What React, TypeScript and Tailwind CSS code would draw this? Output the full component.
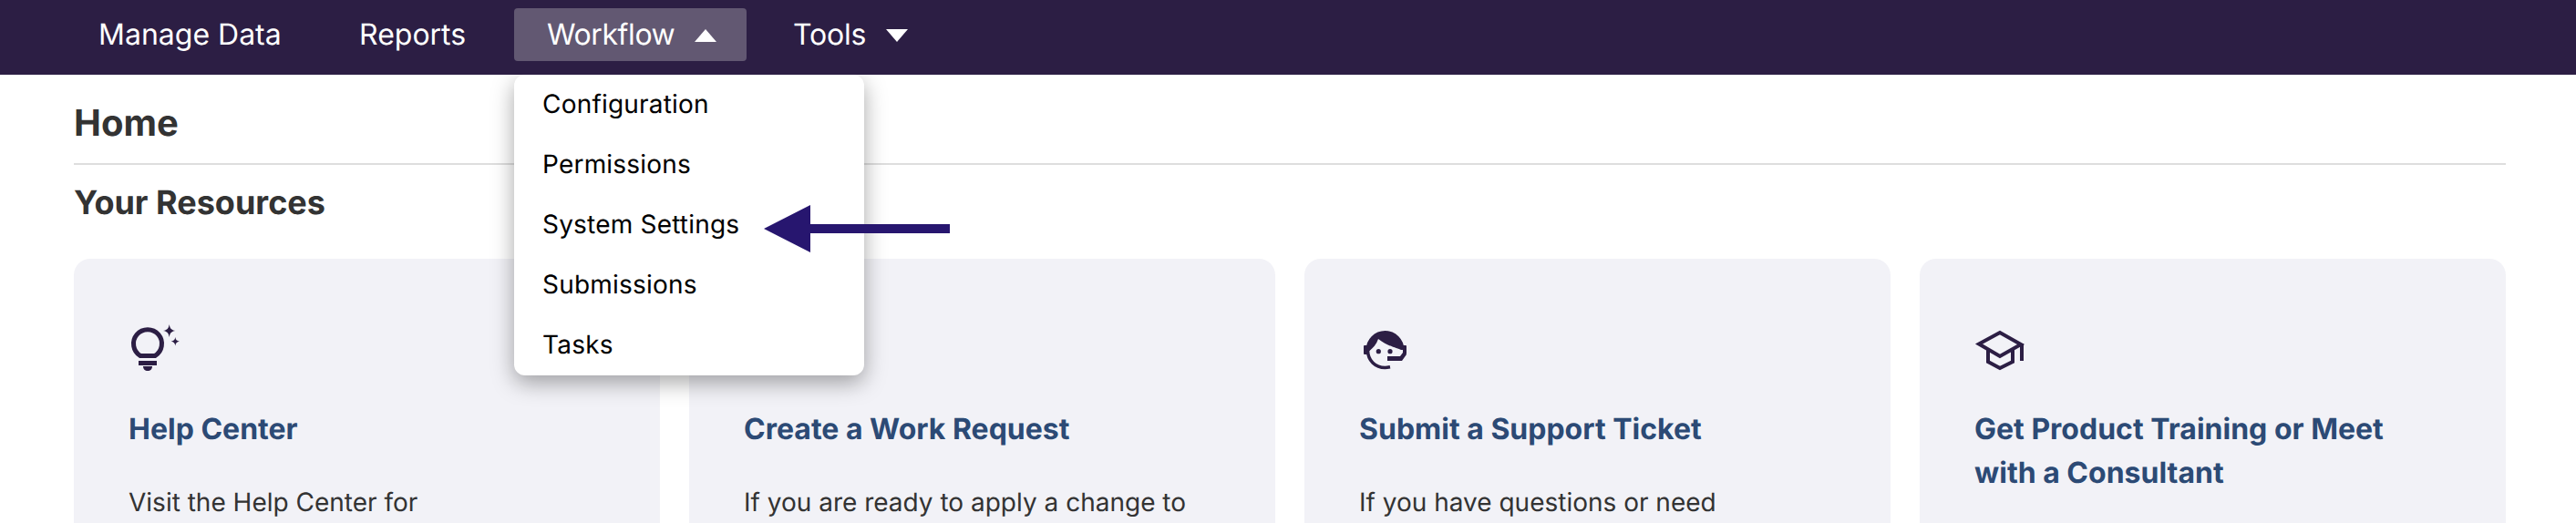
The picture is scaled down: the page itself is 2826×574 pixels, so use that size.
import type { ReactNode } from "react";

const navItems = [
  { label: "Manage Data", className: "w-[270px]" },
  { label: "Reports", className: "w-[190px]" },
  { label: "Workflow", caret: "up", className: "w-[255px] bg-[#625872] tracking-[-0.4px]" },
  { label: "Tools", caret: "down", className: "-ml-[1px] tracking-[-0.2px]" },
];

const menuItems = ["Configuration", "Permissions", "System Settings", "Submissions", "Tasks"];

function Caret({ dir }: { dir: string }) {
  return (
    <svg width="24" height="14" viewBox="0 0 24 14" className="ml-[22px] mt-[2px]">
      <path d={dir === "up" ? "M12 0L24 14H0Z" : "M0 0H24L12 14Z"} fill="#fff" />
    </svg>
  );
}

function BulbIcon() {
  return (
    <svg width="56" height="56" viewBox="0 0 56 56" fill="#2c1e44">
      <path d="M13 36.5A15.5 15.5 0 1 1 29 36.5Z" fill="none" stroke="#2c1e44" strokeWidth="5" strokeLinejoin="round" />
      <rect x="11" y="42" width="20" height="5" />
      <path d="M16 48H26C26 51 24 53 21 53S16 51 16 48Z" />
      <path d="M44.7 2C45.5 6.5 47 8.2 51.4 9C47 9.8 45.5 11.5 44.7 16C43.9 11.5 42.4 9.8 38 9C42.4 8.2 43.9 6.5 44.7 2Z" />
      <path d="M51.3 16C51.8 19 52.8 20 55.8 20.7C52.8 21.4 51.8 22.4 51.3 25.4C50.8 22.4 49.8 21.4 46.8 20.7C49.8 20 50.8 19 51.3 16Z" />
    </svg>
  );
}

function AgentIcon() {
  return (
    <svg width="56" height="56" viewBox="0 0 56 56" fill="#2c1e44">
      {/* hair */}
      <path d="M7.5 30A21 21 0 0 1 49.5 30H46C42 28 31 26 21 18C19 24 15 28 11.5 31H7.5Z" />
      {/* face outline, ends under the mic */}
      <path d="M9.5 30C9.5 42 18 49.5 28.5 49.5C30.5 49.5 32 49.2 34 48.8" fill="none" stroke="#2c1e44" strokeWidth="3.5" />
      <rect x="5" y="25" width="4" height="10" rx="1" />
      <rect x="48" y="25" width="4" height="10" rx="1" />
      <path d="M52 35L47 42H31V37H45L48 33Z" />
      <circle cx="21.3" cy="31.7" r="2.6" />
      <circle cx="34" cy="31.7" r="2.6" />
    </svg>
  );
}

function CapIcon() {
  return (
    <svg width="56" height="56" viewBox="0 0 56 56" fill="none" stroke="#2c1e44" strokeWidth="4">
      <path d="M5 23.5L28 11L51 24L28 37Z" />
      <path d="M52 23V42" />
      <path d="M15 30V43L28 50L42 43V30" />
    </svg>
  );
}

function ResourceCard({ icon, title, body }: { icon: ReactNode; title: ReactNode; body?: string }) {
  return (
    <div className="h-[400px] rounded-[18px] bg-[#f2f2f7] px-[60px] pt-[70px]">
      <div className="h-[56px]">{icon}</div>
      <h3 className="mt-[37px] text-[32px] leading-[48px] font-bold text-[#2c4a75]">{title}</h3>
      {body && <p className="mt-[34px] text-[28px] leading-[44px] text-[#333]">{body}</p>}
    </div>
  );
}

export default function App() {
  return (
    <div className="h-[574px] overflow-hidden bg-white font-['Inter',sans-serif] [text-rendering:geometricPrecision]">
      <nav className="relative z-20 flex h-[82px] gap-[16px] bg-[#2c1e44] pl-[72px] pt-[9px]">
        {navItems.map((item) => (
          <div
            key={item.label}
            className={`flex h-[58px] items-center rounded-[4px] pl-[36px] text-[32px] text-white ${item.className}`}
          >
            {item.label}
            {item.caret && <Caret dir={item.caret} />}
          </div>
        ))}
      </nav>

      <main className="relative pl-[81px] pr-[77px]">
        <div className="h-[99px] border-b-2 border-[#dedede] pt-[29px]">
          <h1 className="text-[40px] leading-[48px] font-bold text-[#333]">Home</h1>
        </div>
        <h2 className="mt-[19px] text-[36px] leading-[44px] font-bold text-[#333]">Your Resources</h2>

        <div className="mt-[40px] grid grid-cols-4 gap-[32px]">
          <ResourceCard icon={<BulbIcon />} title="Help Center" body="Visit the Help Center for" />
          <ResourceCard icon={null} title="Create a Work Request" body="If you are ready to apply a change to" />
          <ResourceCard icon={<AgentIcon />} title="Submit a Support Ticket" body="If you have questions or need" />
          <ResourceCard icon={<CapIcon />} title={<>Get Product Training or Meet<br />with a Consultant</>} />
        </div>

        <ul className="absolute left-[564px] top-0 w-[384px] rounded-[12px] bg-white text-[28px] tracking-[0.2px] text-black shadow-[0_8px_24px_rgba(0,0,0,0.35)]">
          {menuItems.map((label) => (
            <li key={label} className="flex h-[66px] items-center pl-[31px] pb-[3px]">
              {label}
            </li>
          ))}
        </ul>

        <svg width="204" height="52" viewBox="0 0 204 52" className="absolute left-[838px] top-[143px]" fill="#27166f">
          <path d="M0 26L51 0V21H204V31H51V52Z" />
        </svg>
      </main>
    </div>
  );
}
